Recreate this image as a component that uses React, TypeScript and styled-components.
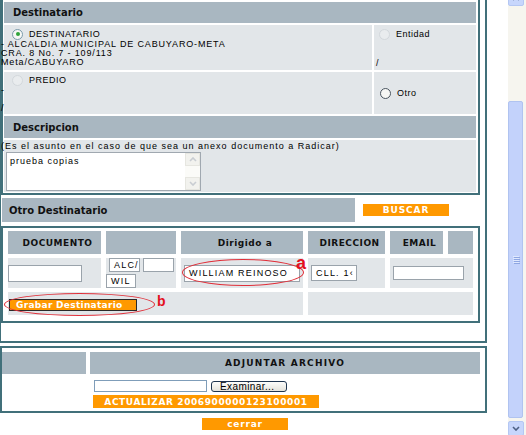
import React from "react";
import styled, { createGlobalStyle } from "styled-components";

const teal = "#41707a";
const headGrey = "#a9b7c1";
const cellGrey = "#e2e6e9";
const orange = "#ff9900";

const GlobalStyle = createGlobalStyle`
  html, body {
    margin: 0;
    padding: 0;
    background: #fff;
  }
  body {
    font-family: "Liberation Sans", Arial, sans-serif;
    font-size: 9px;
    color: #000;
    overflow: hidden;
  }
`;

const Page = styled.div`
  display: flex;
  width: 526px;
  height: 435px;
  overflow: hidden;
`;

const Main = styled.div`
  width: 508px;
  display: flex;
  flex-direction: column;
`;

const Outer = styled.div`
  box-sizing: border-box;
  width: 487px;
  height: 343px;
  border-left: 1px solid ${teal};
  border-right: 2px solid ${teal};
  border-bottom: 2px solid ${teal};
  padding-right: 5px;
`;

const DestPanel = styled.div`
  box-sizing: border-box;
  width: 479px;
  border: 2px solid ${teal};
  border-top: none;
  padding: 2px 2px 1px 1px;
  display: grid;
  grid-template-columns: 368px 1fr;
  grid-template-rows: 21px 45px 42px 22px 52px;
  gap: 2px;
`;

const SectionHead = styled.div<{ $pad?: number }>`
  grid-column: 1 / -1;
  background: ${headGrey};
  display: flex;
  align-items: center;
  padding-left: ${(p) => p.$pad ?? 9}px;
  font-family: "DejaVu Sans", Verdana, sans-serif;
  font-weight: 700;
  font-size: 10px;
  color: #111;
`;

const Cell = styled.div<{ $center?: boolean; $full?: boolean }>`
  background: ${cellGrey};
  display: flex;
  flex-direction: column;
  justify-content: ${(p) => (p.$center ? "center" : "flex-start")};
  grid-column: ${(p) => (p.$full ? "1 / -1" : "auto")};
  min-width: 0;
`;

const RadioRow = styled.div<{ $top?: number; $indent?: number }>`
  display: flex;
  align-items: center;
  height: 12px;
  margin-top: ${(p) => p.$top ?? 0}px;
  padding-left: ${(p) => p.$indent ?? 8}px;
  gap: 6px;
  letter-spacing: 0.5px;
  white-space: nowrap;
`;

const Radio = styled.span<{ $kind: "checked" | "disabled" | "empty" }>`
  box-sizing: border-box;
  width: 11px;
  height: 11px;
  border-radius: 50%;
  flex: none;
  position: relative;
  border: 1px solid
    ${(p) =>
      p.$kind === "checked" ? "#7a9aaa" : p.$kind === "empty" ? "#4a5560" : "#d3d8dc"};
  background: ${(p) => (p.$kind === "disabled" ? "#e9ecee" : "#f6f7f5")};

  &::after {
    content: "";
    display: ${(p) => (p.$kind === "checked" ? "block" : "none")};
    position: absolute;
    left: 2.5px;
    top: 2.5px;
    width: 4px;
    height: 4px;
    border-radius: 50%;
    background: #2fa33a;
  }
`;

const Line = styled.div<{ $shift?: number }>`
  line-height: 9px;
  min-height: 9px;
  white-space: nowrap;
  letter-spacing: 0.85px;
  margin-left: ${(p) => p.$shift ?? -3}px;
`;

const DescText = styled.div`
  line-height: 9px;
  margin: 2px 0 0 -3px;
  letter-spacing: 1px;
  white-space: nowrap;
`;

const TextArea = styled.div`
  box-sizing: border-box;
  margin: 1px 0 0 2px;
  width: 195px;
  height: 39px;
  background: #fff;
  border: 1px solid #a0a8b0;
  display: flex;
`;

const TextAreaBody = styled.div`
  flex: 1;
  padding: 3px 0 0 3px;
  letter-spacing: 1px;
  font-size: 9px;
`;

const AreaScroll = styled.div`
  width: 15px;
  display: flex;
  flex-direction: column;
  justify-content: space-between;
  background: #fbfbf8;
`;

const AreaBtn = styled.div`
  height: 13px;
  background: #f2f2ee;
  border: 1px solid #e6e6e0;
  box-sizing: border-box;
  display: flex;
  align-items: center;
  justify-content: center;
`;

const BarRow = styled.div`
  display: flex;
  align-items: center;
  height: 24px;
  margin-top: 3px;
`;

const Bar = styled.div`
  width: 353px;
  height: 24px;
  margin-left: 1px;
  background: ${headGrey};
  display: flex;
  align-items: center;
  padding-left: 7px;
  box-sizing: border-box;
  font-family: "DejaVu Sans", Verdana, sans-serif;
  font-weight: 700;
  font-size: 10px;
  color: #111;
`;

const OrangeButton = styled.div<{ $w: number; $h?: number; $left?: number; $spacing?: number }>`
  box-sizing: border-box;
  width: ${(p) => p.$w}px;
  height: ${(p) => p.$h ?? 12}px;
  margin-left: ${(p) => p.$left ?? 0}px;
  background: ${orange};
  color: #fff;
  display: flex;
  align-items: center;
  justify-content: center;
  font-family: "DejaVu Sans", Verdana, sans-serif;
  font-weight: 700;
  font-size: 9px;
  letter-spacing: ${(p) => p.$spacing ?? 0.6}px;
  white-space: nowrap;
`;

const TablePanel = styled.div`
  box-sizing: border-box;
  width: 479px;
  margin-top: 4px;
  border: 2px solid ${teal};
  padding: 3px 5px 6px 5px;
  display: grid;
  grid-template-columns: 93px 70px 122px 77px 53px 1fr;
  grid-template-rows: 23px 30px 23px;
  column-gap: 5px;
  row-gap: 4px;
`;

const TH = styled.div`
  background: ${headGrey};
  display: flex;
  align-items: center;
  justify-content: center;
  padding-left: 6px;
  font-family: "DejaVu Sans", Verdana, sans-serif;
  font-weight: 700;
  font-size: 9px;
  letter-spacing: 0.5px;
  color: #111;
  white-space: nowrap;
  overflow: visible;
`;

const TD = styled.div<{ $span?: string }>`
  background: ${cellGrey};
  display: flex;
  align-items: center;
  position: relative;
  grid-column: ${(p) => p.$span ?? "auto"};
`;

const WrapCell = styled(TD)`
  flex-wrap: wrap;
  align-items: flex-start;
  align-content: flex-start;
  column-gap: 3px;
  row-gap: 2px;
`;

const Input = styled.div<{ $w: number; $h?: number; $left?: number }>`
  box-sizing: border-box;
  width: ${(p) => p.$w}px;
  height: ${(p) => p.$h ?? 14}px;
  margin-left: ${(p) => p.$left ?? 0}px;
  background: #fff;
  border: 1px solid #9aa3ab;
  padding-left: 4px;
  display: flex;
  align-items: center;
  overflow: hidden;
  white-space: nowrap;
  letter-spacing: 1.2px;
  font-size: 9px;
`;

const Ellipse = styled.div<{ $x: number; $y: number; $w: number; $h: number }>`
  position: absolute;
  left: ${(p) => p.$x}px;
  top: ${(p) => p.$y}px;
  width: ${(p) => p.$w}px;
  height: ${(p) => p.$h}px;
  border: 1px solid #e0303a;
  border-radius: 50%;
  box-sizing: border-box;
  pointer-events: none;
`;

const Mark = styled.div<{ $x: number; $y: number; $size: number }>`
  position: absolute;
  left: ${(p) => p.$x}px;
  top: ${(p) => p.$y}px;
  font-family: "Liberation Sans", Arial, sans-serif;
  font-weight: 700;
  font-size: ${(p) => p.$size}px;
  line-height: 1;
  color: #e4101e;
`;

const GrabarButton = styled(OrangeButton)`
  border: 1px solid #2a2a2a;
  justify-content: flex-start;
  padding-left: 6px;
  letter-spacing: 0.3px;
  margin-top: 3px;
`;

const BottomPanel = styled.div`
  box-sizing: border-box;
  width: 487px;
  margin-top: 3px;
  border: 2px solid ${teal};
  padding: 4px 5px 3px 0;
  display: grid;
  grid-template-columns: 84px 1fr;
  grid-template-rows: 22px auto;
  column-gap: 4px;
`;

const AttachHead = styled(TH)`
  padding-left: 0;
  letter-spacing: 1.2px;
`;

const AttachBody = styled.div`
  grid-column: 2;
  display: flex;
  flex-direction: column;
  padding-top: 6px;
`;

const FileRow = styled.div`
  display: flex;
  align-items: center;
  gap: 4px;
  margin-left: 4px;
  height: 12px;
`;

const FileField = styled.div`
  box-sizing: border-box;
  width: 113px;
  height: 12px;
  background: #fff;
  border: 1px solid #7f9db9;
`;

const Examinar = styled.div`
  box-sizing: border-box;
  width: 76px;
  height: 11px;
  border: 1px solid #1f3550;
  border-radius: 3px;
  background: linear-gradient(#fdfdfb, #e4e3dc);
  font-family: "Liberation Sans", Arial, sans-serif;
  font-size: 10px;
  line-height: 9px;
  padding-left: 8px;
  letter-spacing: 0.4px;
`;

const Footer = styled.div`
  width: 487px;
  display: flex;
  justify-content: center;
  margin-top: 5px;
  padding-left: 3px;
  box-sizing: border-box;
`;

const Scrollbar = styled.div`
  width: 18px;
  height: 435px;
  background: #f6f5ef;
  display: flex;
  flex-direction: column;
  align-items: flex-start;
  overflow: hidden;
`;

const ScrollBtn = styled.div<{ $top?: number }>`
  box-sizing: border-box;
  width: 16px;
  height: 15px;
  flex: none;
  margin-top: ${(p) => p.$top ?? 0}px;
  background: #c7d6fc;
  border: 1px solid #b4c7f3;
  border-radius: 2px;
  display: flex;
  align-items: center;
  justify-content: center;
`;

const Thumb = styled.div`
  box-sizing: border-box;
  width: 15px;
  height: 317px;
  flex: none;
  margin-top: 95px;
  background: #c3d2fb;
  border: 1px solid #b0c3f0;
  border-radius: 2px;
  display: flex;
  flex-direction: column;
  align-items: center;
  justify-content: center;
  gap: 1px;
`;

const Grip = styled.span`
  width: 6px;
  height: 1px;
  background: #dfe8fe;
  box-shadow: 1px 1px 0 #8ea6e2;
`;

const Chevron: React.FC<{ up?: boolean; color?: string }> = ({ up, color = "#4d6185" }) => (
  <svg width="8" height="5" viewBox="0 0 8 5">
    <polyline
      points={up ? "1,4 4,1 7,4" : "1,1 4,4 7,1"}
      fill="none"
      stroke={color}
      strokeWidth="1.6"
    />
  </svg>
);

const App: React.FC = () => {
  return (
    <Page>
      <GlobalStyle />
      <Main>
        <Outer>
          <DestPanel>
            <SectionHead>Destinatario</SectionHead>
            <Cell>
              <RadioRow $top={3}>
                <Radio $kind="checked" />
                DESTINATARIO
              </RadioRow>
              <Line>- ALCALDIA MUNICIPAL DE CABUYARO-META</Line>
              <Line>CRA. 8 No. 7 - 109/113</Line>
              <Line>Meta/CABUYARO</Line>
            </Cell>
            <Cell>
              <RadioRow $top={3} $indent={5}>
                <Radio $kind="disabled" />
                Entidad
              </RadioRow>
              <Line $shift={2} style={{ marginTop: 19 }}>/</Line>
            </Cell>
            <Cell>
              <RadioRow $top={2}>
                <Radio $kind="disabled" />
                PREDIO
              </RadioRow>
              <Line>-</Line>
              <Line />
              <Line>/</Line>
            </Cell>
            <Cell $center>
              <RadioRow $indent={6}>
                <Radio $kind="empty" />
                Otro
              </RadioRow>
            </Cell>
            <SectionHead>Descripcion</SectionHead>
            <Cell $full>
              <DescText>(Es el asunto en el caso de que sea un anexo documento a Radicar)</DescText>
              <TextArea>
                <TextAreaBody>prueba copias</TextAreaBody>
                <AreaScroll>
                  <AreaBtn>
                    <Chevron up color="#c9cdd2" />
                  </AreaBtn>
                  <AreaBtn>
                    <Chevron color="#c9cdd2" />
                  </AreaBtn>
                </AreaScroll>
              </TextArea>
            </Cell>
          </DestPanel>

          <BarRow>
            <Bar>Otro Destinatario</Bar>
            <OrangeButton $w={86} $left={8} $spacing={0.9}>
              BUSCAR
            </OrangeButton>
          </BarRow>

          <TablePanel>
            <TH>DOCUMENTO</TH>
            <TH />
            <TH>Dirigido a</TH>
            <TH>DIRECCION</TH>
            <TH>EMAIL</TH>
            <TH />

            <TD>
              <Input $w={74} $h={17} />
            </TD>
            <WrapCell>
              <Input $w={31} $left={3}>ALC/</Input>
              <Input $w={31} />
              <Input $w={30}>WIL</Input>
            </WrapCell>
            <TD>
              <Input $w={116} $h={17} $left={3}>
                WILLIAM REINOSO
              </Input>
              <Ellipse $x={1} $y={1} $w={122} $h={27} />
              <Mark $x={115} $y={-4} $size={18}>
                a
              </Mark>
            </TD>
            <TD>
              <Input $w={46} $h={16} $left={3}>
                CLL. 1‹
              </Input>
            </TD>
            <TD $span="5 / 7">
              <Input $w={71} $left={3} />
            </TD>

            <TD $span="1 / 4">
              <GrabarButton $w={128} $left={1}>
                Grabar Destinatario
              </GrabarButton>
              <Ellipse $x={-4} $y={1} $w={151} $h={23} />
              <Mark $x={149} $y={2} $size={14}>
                b
              </Mark>
            </TD>
            <TD $span="4 / 7" />
          </TablePanel>
        </Outer>

        <BottomPanel>
          <TH />
          <AttachHead>ADJUNTAR ARCHIVO</AttachHead>
          <AttachBody>
            <FileRow>
              <FileField />
              <Examinar>Examinar...</Examinar>
            </FileRow>
            <OrangeButton $w={226} $h={13} $left={3} $spacing={0.6} style={{ marginTop: 3 }}>
              ACTUALIZAR 2006900000123100001
            </OrangeButton>
          </AttachBody>
        </BottomPanel>

        <Footer>
          <OrangeButton $w={86} $spacing={0.8}>
            cerrar
          </OrangeButton>
        </Footer>
      </Main>

      <Scrollbar>
        <ScrollBtn $top={-9}>
          <Chevron up />
        </ScrollBtn>
        <Thumb>
          <Grip />
          <Grip />
          <Grip />
          <Grip />
        </Thumb>
        <ScrollBtn $top={3}>
          <Chevron />
        </ScrollBtn>
      </Scrollbar>
    </Page>
  );
};

export default App;
